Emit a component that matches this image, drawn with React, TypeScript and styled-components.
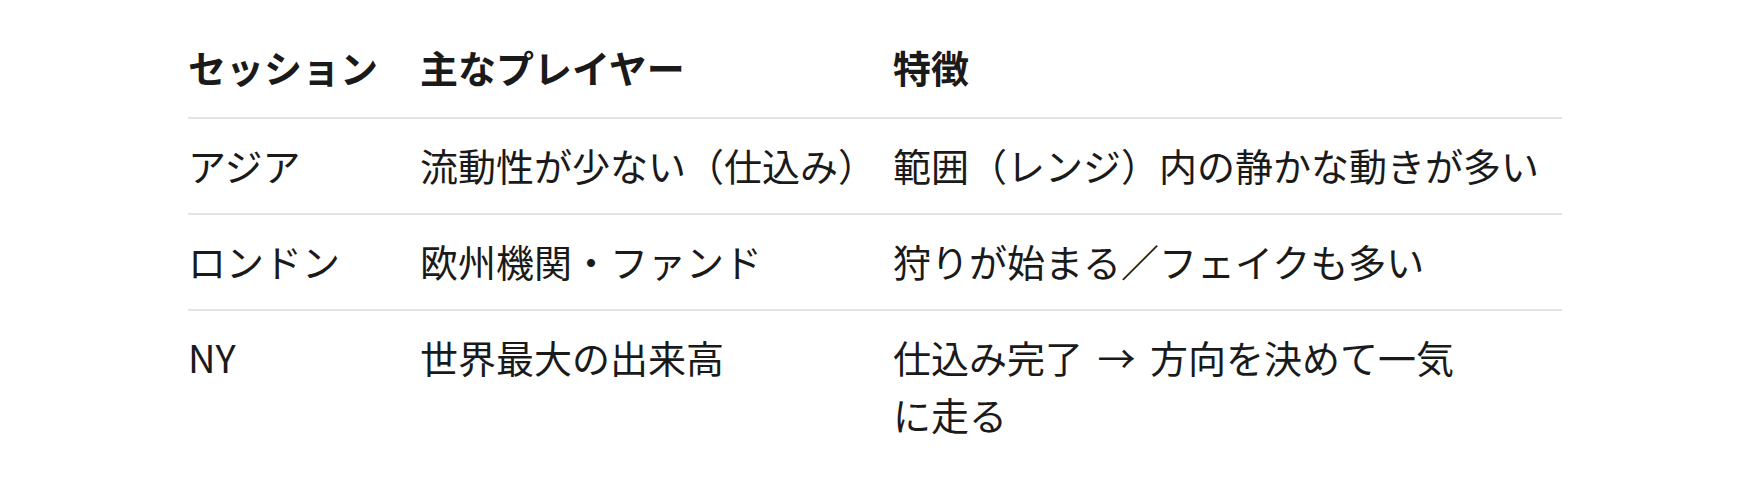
import React from "react";
import styled, { createGlobalStyle } from "styled-components";

const GlobalStyle = createGlobalStyle`
  html, body {
    margin: 0;
    padding: 0;
    background: #ffffff;
  }
  body {
    font-family: "Noto Sans CJK JP", "Noto Sans", sans-serif;
    color: #1a1a1a;
  }
`;

const Page = styled.main`
  padding-top: 23px;
  display: flex;
  justify-content: center;
`;

const Table = styled.table`
  width: 1374px;
  border-collapse: collapse;
  table-layout: fixed;
  font-size: 38px;
  line-height: 57px;
`;

const Col = styled.col<{ $w?: number }>`
  width: ${(p) => (p.$w ? `${p.$w}px` : "auto")};
`;

const Row = styled.tr<{ $last?: boolean }>`
  border-bottom: ${(p) => (p.$last ? "none" : "2px solid #e4e4e4")};
`;

const HeadCell = styled.th`
  text-align: left;
  font-weight: 700;
  padding: 15px 20px 22px 0;
  vertical-align: top;
  white-space: nowrap;
`;

const Cell = styled.td`
  text-align: left;
  font-weight: 400;
  padding: 17px 20px 20px 0;
  vertical-align: top;
`;

const Spaced = styled.span`
  word-spacing: 6px;
`;

const rows: { session: string; players: string; feature: React.ReactNode }[] = [
  {
    session: "アジア",
    players: "流動性が少ない（仕込み）",
    feature: "範囲（レンジ）内の静かな動きが多い",
  },
  {
    session: "ロンドン",
    players: "欧州機関・ファンド",
    feature: "狩りが始まる／フェイクも多い",
  },
  {
    session: "NY",
    players: "世界最大の出来高",
    feature: (
      <Spaced>
        仕込み完了 → 方向を決めて一気
        <br />
        に走る
      </Spaced>
    ),
  },
];

export default function App() {
  return (
    <>
      <GlobalStyle />
      <Page>
        <Table>
          <colgroup>
            <Col $w={232} />
            <Col $w={473} />
            <Col />
          </colgroup>
          <thead>
            <Row>
              <HeadCell>セッション</HeadCell>
              <HeadCell>主なプレイヤー</HeadCell>
              <HeadCell>特徴</HeadCell>
            </Row>
          </thead>
          <tbody>
            {rows.map((r, i) => (
              <Row key={r.session} $last={i === rows.length - 1}>
                <Cell>{r.session}</Cell>
                <Cell>{r.players}</Cell>
                <Cell>{r.feature}</Cell>
              </Row>
            ))}
          </tbody>
        </Table>
      </Page>
    </>
  );
}
